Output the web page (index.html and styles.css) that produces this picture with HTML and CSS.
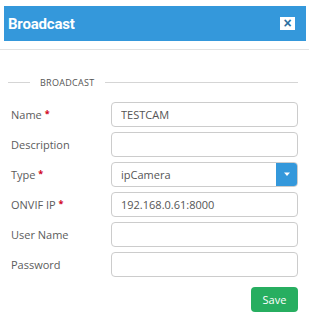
FILE: index.html
```html
<!DOCTYPE html>
<html lang="en">
<head>
  <meta charset="UTF-8">
  <title>Broadcast</title>
  <link rel="stylesheet" href="styles.css">
</head>
<body>
  <div class="modal">
    <div class="modal-head">
      <h3 class="modal-title">Broadcast</h3>
      <button class="close">&times;</button>
    </div>
    <div class="modal-body">
      <fieldset class="group">
        <legend>BROADCAST</legend>
        <div class="row">
          <label>Name <span class="req">*</span></label>
          <input class="field" type="text" value="TESTCAM">
        </div>
        <div class="row">
          <label>Description</label>
          <input class="field" type="text" value="">
        </div>
        <div class="row">
          <label>Type <span class="req">*</span></label>
          <div class="select">
            <span class="select-text">ipCamera</span>
            <span class="select-btn">
              <svg width="8" height="5" viewBox="0 0 8 5"><path d="M1 0.5h6L4 4z" fill="#fff"/></svg>
            </span>
          </div>
        </div>
        <div class="row">
          <label>ONVIF IP <span class="req">*</span></label>
          <input class="field" type="text" value="192.168.0.61:8000">
        </div>
        <div class="row">
          <label>User Name</label>
          <input class="field" type="text" value="">
        </div>
        <div class="row">
          <label>Password</label>
          <input class="field" type="password" value="">
        </div>
      </fieldset>
      <div class="actions">
        <button class="btn-save">Save</button>
      </div>
    </div>
  </div>
</body>
</html>
```

FILE: styles.css
```css
*{margin:0;padding:0;box-sizing:border-box;}
body{background:#fff;font-family:"Open Sans","Noto Sans",Arial,sans-serif;color:#555;}

.modal{width:309px;}
.modal-head{display:flex;align-items:center;justify-content:space-between;height:35px;margin:6px 3px 0 4px;padding:0 11px 0 4px;background:#3498db;}
.modal-title{font-family:Roboto,Arial,sans-serif;font-size:15px;font-weight:bold;color:#fff;letter-spacing:-0.2px;}
.close{width:15px;height:13px;border:none;background:#fff;color:#2b6f9f;font-family:Arial,sans-serif;font-size:14px;font-weight:bold;line-height:13px;text-align:center;}

.modal-body{border-top:1px solid #e3e3e3;margin-top:8px;padding:26px 11px 0 8px;}

.group{border:none;border-top:1px solid #d5d5d5;padding:0;}
.group legend{margin-left:22px;padding:0 10px;font-size:9px;color:#555;letter-spacing:0.3px;}

.row{display:flex;align-items:center;height:25px;margin-top:5px;}
.row:first-of-type{margin-top:13px;}
.row label{width:103px;padding-left:3px;font-size:11px;color:#5c5c5c;}
.req{color:#d0021b;font-size:9px;font-weight:bold;vertical-align:2px;}

.field{flex:1;height:25px;border:1px solid #ccc;border-radius:4px;padding:0 9px;font-family:"Open Sans","Noto Sans",Arial,sans-serif;font-size:11px;color:#555;outline:none;}
.select{flex:1;display:flex;height:25px;border:1px solid #ccc;border-radius:4px;overflow:hidden;}
.select-text{flex:1;padding:0 9px;font-size:11px;line-height:23px;color:#555;}
.select-btn{display:flex;align-items:center;justify-content:center;width:22px;margin:-1px -1px -1px 0;background:#3498db;}

.actions{display:flex;justify-content:flex-end;padding-top:10px;}
.btn-save{width:47px;height:25px;border:none;border-radius:4px;background:#27ae60;color:#fff;font-family:"Open Sans","Noto Sans",Arial,sans-serif;font-size:11px;}
```
